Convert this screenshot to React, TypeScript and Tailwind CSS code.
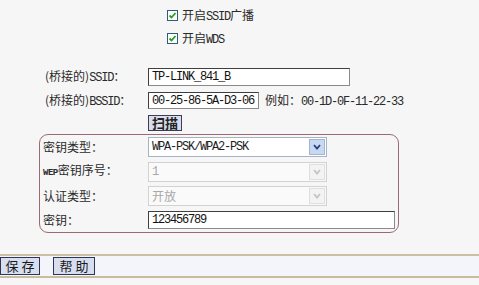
import React from 'react';

const M = ({ children }: { children: React.ReactNode }) => (
  <span className="font-['Liberation_Mono',monospace] tracking-[-1.2px]">{children}</span>
);

function CheckBox() {
  return (
    <svg width="11" height="11" viewBox="0 0 11 11" className="shrink-0">
      <rect x="0.5" y="0.5" width="10" height="10" fill="#ffffff" stroke="#2f5d78" />
      <polyline points="2.5,5.5 4.5,7.5 8.5,3" fill="none" stroke="#22a022" strokeWidth="1.8" />
    </svg>
  );
}

function Chevron({ color }: { color: string }) {
  return (
    <svg width="8" height="6" viewBox="0 0 8 6">
      <polyline points="1,1 4,4.5 7,1" fill="none" stroke={color} strokeWidth="1.8" />
    </svg>
  );
}

function Select({ value, disabled }: { value: React.ReactNode; disabled?: boolean }) {
  return (
    <div
      className={`flex items-stretch w-[179px] h-[20px] border ${
        disabled ? 'border-[#d2d2d2] bg-[#fafafa] text-[#a8a8a8]' : 'border-[#a9b2c0] bg-white text-[#1d1d1d]'
      }`}
    >
      <div className="flex-1 flex items-center pl-[3px]">{value}</div>
      <div
        className={`w-[16px] m-px flex items-center justify-center border ${
          disabled ? 'border-[#dedede] bg-[#f3f3f3]' : 'border-[#9fb4d8] bg-[#c9d8f1]'
        }`}
      >
        <Chevron color={disabled ? '#c4c4c4' : '#253f78'} />
      </div>
    </div>
  );
}

function TextBox({ width, height, children }: { width: string; height: string; children: React.ReactNode }) {
  return (
    <div
      className={`${width} ${height} flex items-center pl-[3px] bg-white border border-[#8a8a8a] border-t-[#3f3f3f] border-l-[#3f3f3f] text-[#111]`}
    >
      {children}
    </div>
  );
}

export default function App() {
  return (
    <div className="w-[479px] h-[285px] overflow-hidden bg-[#f6f6f6] text-[12px] leading-[14px] text-[#2a2a2a] font-['Noto_Sans_CJK_SC',sans-serif]">
      <div className="pl-[167px] pt-[10px] flex flex-col gap-[12px]">
        <div className="flex items-center h-[11px]">
          <CheckBox />
          <span className="ml-[4px]">
            开启<M>SSID</M>广播
          </span>
        </div>
        <div className="flex items-center h-[11px]">
          <CheckBox />
          <span className="ml-[4px]">
            开启<M>WDS</M>
          </span>
        </div>
      </div>

      <div className="mt-[24px] pl-[45px] flex items-center h-[18px]">
        <span className="w-[103px]">
          (桥接的)<M>SSID</M>：
        </span>
        <TextBox width="w-[202px]" height="h-[18px]">
          <M>TP-LINK_841_B</M>
        </TextBox>
      </div>

      <div className="mt-[6px] pl-[45px] flex items-center h-[17px]">
        <span className="w-[103px]">
          (桥接的)<M>BSSID</M>：
        </span>
        <TextBox width="w-[111px]" height="h-[17px]">
          <M>00-25-86-5A-D3-06</M>
        </TextBox>
        <span className="ml-[6px]">
          例如：<M>00-1D-0F-11-22-33</M>
        </span>
      </div>

      <div className="mt-[6px] pl-[148px]">
        <div className="w-[34px] h-[16px] flex items-center justify-center bg-[#dadeec] border border-[#3a3e55] text-[13px] font-semibold text-[#222]">
          扫描
        </div>
      </div>

      <div className="mt-[3px] ml-[39px] w-[360px] border border-[#9b6b73] rounded-[9px] pl-[3px]">
        <div className="flex items-center h-[24px]">
          <span className="w-[105px]">密钥类型：</span>
          <Select value={<M>WPA-PSK/WPA2-PSK</M>} />
        </div>
        <div className="flex items-center h-[25px]">
          <span className="w-[105px]">
            <span className="font-['Liberation_Mono',monospace] text-[9px] font-bold tracking-[-0.5px]">WEP</span>密钥序号：
          </span>
          <Select value={<M>1</M>} disabled />
        </div>
        <div className="flex items-center h-[24px]">
          <span className="w-[105px]">认证类型：</span>
          <Select value="开放" disabled />
        </div>
        <div className="flex items-center h-[24px]">
          <span className="w-[105px]">密钥：</span>
          <TextBox width="w-[247px]" height="h-[18px]">
            <M>123456789</M>
          </TextBox>
        </div>
      </div>

      <div className="mt-[21px] border-t-2 border-[#cdbfa3] bg-[#f3f5fa] h-[24px] flex items-start pt-[1px] border-b-2 border-b-[#c9bb9f]">
        <div className="w-[40px] h-[18px] flex items-center justify-center bg-[#d6def0] border border-[#2f3552] text-[13px] text-[#1a1a1a]">
          保&nbsp;存
        </div>
        <div className="ml-[13px] w-[42px] h-[18px] flex items-center justify-center bg-[#d6def0] border border-[#2f3552] text-[13px] text-[#1a1a1a]">
          帮&nbsp;助
        </div>
      </div>
    </div>
  );
}
